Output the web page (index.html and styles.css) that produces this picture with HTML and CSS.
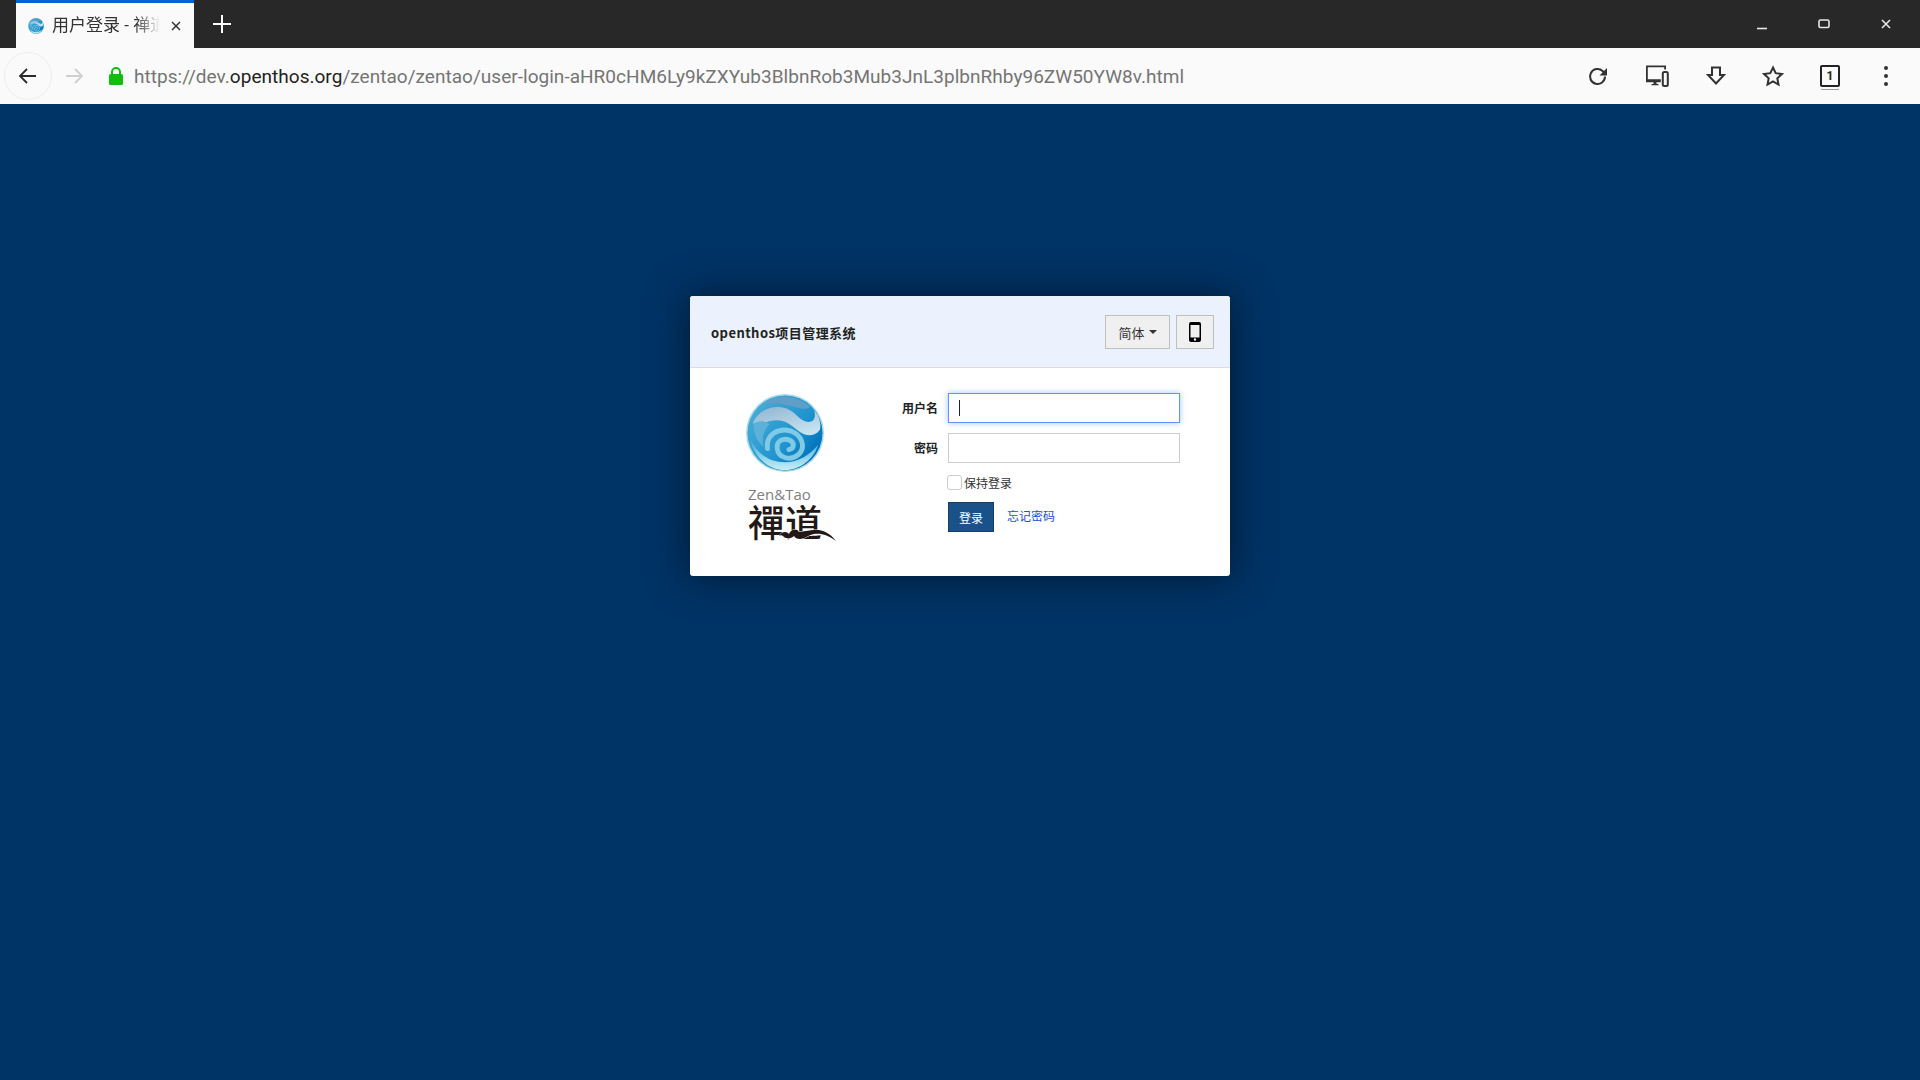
FILE: index.html
```html
<!DOCTYPE html>
<html lang="zh-CN">
<head>
    <meta charset="UTF-8">
    <title>用户登录 - 禅道</title>
    <link rel="stylesheet" href="styles.css">
</head>
<body>
    <!-- Shared globe logo -->
    <svg class="defs" width="0" height="0">
        <defs>
            <linearGradient id="globeFill" x1="0.1" y1="0.2" x2="0.9" y2="0.8">
                <stop offset="0" stop-color="#45aad6"/>
                <stop offset="0.6" stop-color="#1f94cf"/>
                <stop offset="1" stop-color="#0070bb"/>
            </linearGradient>
            <linearGradient id="globeTop" x1="0" y1="0" x2="0.7" y2="1">
                <stop offset="0" stop-color="#8fb4d0"/>
                <stop offset="1" stop-color="#c6e3ef"/>
            </linearGradient>
            <linearGradient id="globeBottom" x1="0" y1="0" x2="0" y2="1">
                <stop offset="0" stop-color="#39a8d8"/>
                <stop offset="1" stop-color="#c9eff6"/>
            </linearGradient>
            <symbol id="globe" viewBox="0 0 80 80">
                <circle cx="40" cy="40" r="40" fill="#a9dbe6"/>
                <circle cx="40" cy="40" r="38.500" fill="url(#globeFill)"/>
                <path d="M16 11C30 0 52 0 66 13C60 18 50 13 40 11C30 9 22 10 16 11z" fill="#5f9ec6"/>
                <path d="M7 30C14 12 38 8 51 21C57 27 63 31 69 27C71 24 71 20 70 17C75 22 77 30 76 36C73 42 66 44 59 41C50 37 44 27 32 27C22 27 14 33 7 30z" fill="url(#globeTop)"/>
                <path d="M4 46C12 62 24 70 40 70C54 70 66 62 74 52C70 66 56 78 40 78C22 78 8 64 4 46z" fill="url(#globeBottom)"/>
                <path d="M8 30C12 27 20 27 24 31C18 37 16 46 18 54C12 50 7 40 8 30z" fill="#5cb1d8"/>
                <path d="M22 56C20 42 33 34 46 38C57 42 62 54 54 62C46 69 33 66 32 56C31 48 38 45 44 47C50 49 50 56 44 57" fill="none" stroke="#7fcbe6" stroke-width="5" stroke-linecap="round"/>
            </symbol>
        </defs>
    </svg>

    <!-- Tab strip -->
    <header class="tabbar">
        <div class="tab">
            <svg class="tab-favicon" width="16" height="16"><use href="#globe"/></svg>
            <span class="tab-title">用户登录 - 禅道</span>
            <svg class="tab-close" width="10" height="10" viewBox="0 0 10 10"><path d="M1 1l8 8M9 1l-8 8"/></svg>
        </div>
        <svg class="new-tab" width="20" height="20" viewBox="0 0 20 20"><path d="M10 1v18M1 10h18"/></svg>
        <div class="window-controls">
            <button class="win-btn"><svg width="12" height="12" viewBox="0 0 12 12"><path d="M1 10.500h10"/></svg></button>
            <button class="win-btn"><svg width="12" height="12" viewBox="0 0 12 12"><rect x="1" y="2" width="10" height="7.500" rx="1.500"/></svg></button>
            <button class="win-btn"><svg width="12" height="12" viewBox="0 0 12 12"><path d="M2 2l8 8M10 2l-8 8"/></svg></button>
        </div>
    </header>

    <!-- Address bar -->
    <nav class="toolbar">
        <button class="back-btn">
            <svg width="20" height="20" viewBox="0 0 20 20"><path d="M18 10H2M9 3l-7 7 7 7"/></svg>
        </button>
        <svg class="forward" width="20" height="20" viewBox="0 0 20 20"><path d="M2 10h16M11 3l7 7-7 7"/></svg>
        <svg class="lock" width="16" height="20" viewBox="0 0 16 20"><path d="M4 9V6a4 4 0 0 1 8 0v3" fill="none" stroke="#0fbe0f" stroke-width="2"/><rect x="1" y="8" width="14" height="11" rx="1.500" fill="#0fbe0f"/></svg>
        <div class="url"><span class="url-dim">https://dev.</span>openthos.org<span class="url-dim">/zentao/zentao/user-login-aHR0cHM6Ly9kZXYub3BlbnRob3Mub3JnL3plbnRhby96ZW50YW8v.html</span></div>
        <div class="actions">
            <button class="act-btn"><svg width="22" height="22" viewBox="0 0 22 22"><path d="M18 11.500a7.500 7.500 0 1 1-2.400-5.500L18 8.500"/><path class="solid" d="M20 3v7.500h-7.500z"/></svg></button>
            <button class="act-btn act-wide"><svg width="24" height="24" viewBox="0 0 24 24"><path class="solid" d="M1 1.500h20v4h-1.800V3.200H2.800v12h13v3H1zM6.500 20h7v1.300h-7z"/><path class="solid" d="M8.500 18h3v2h-3z"/><rect x="17.800" y="8" width="5" height="14" rx="1.500"/></svg></button>
            <button class="act-btn act-wide"><svg width="20" height="22" viewBox="0 0 20 22"><path d="M6 2.500h8v7.500h4L10 18.500 2 10h4z"/></svg></button>
            <button class="act-btn"><svg width="22" height="22" viewBox="0 0 22 22"><path d="M11 2.500l2.700 5.700 6.200.8-4.600 4.300 1.200 6.200L11 16.400l-5.500 3.100 1.200-6.200L2.100 9l6.200-.8z"/></svg></button>
            <button class="act-btn"><span class="tab-count">1</span></button>
            <button class="act-btn act-last"><span class="dots"><i></i><i></i><i></i></span></button>
        </div>
    </nav>

    <!-- Login page -->
    <main class="page">
        <div class="login-card">
            <div class="card-head">
                <h4 class="card-title">openthos项目管理系统</h4>
                <div class="head-actions">
                    <button class="btn-lang">简体<span class="caret"></span></button>
                    <button class="btn-mobile">
                        <svg width="12" height="20" viewBox="0 0 12 20"><path fill-rule="evenodd" d="M2 0h8a2 2 0 0 1 2 2v16a2 2 0 0 1-2 2H2a2 2 0 0 1-2-2V2a2 2 0 0 1 2-2zM1.500 3v12.500h9V3zM6 16.300a1.200 1.200 0 1 0 0 2.400 1.200 1.200 0 0 0 0-2.400z"/></svg>
                    </button>
                </div>
            </div>
            <div class="card-body">
                <div class="logo">
                    <svg class="logo-globe" width="78" height="78"><use href="#globe"/></svg>
                    <div class="logo-en">Zen&amp;Tao</div>
                    <div class="logo-cn">禪道
                        <svg class="logo-swirl" width="60" height="20" viewBox="0 0 60 20"><path d="M1 12c3-5 8-5 10-2 2-5 8-6 10-2 5-1 9-1 14-2 8-1 16 2 23 11-8-6-15-8-22-7-6 1-9 5-14 5-3 0-5-1-6-3-3 3-9 3-11 0-1-1-3-1-4 0z"/></svg>
                    </div>
                </div>
                <form class="login-form">
                    <label class="field-label">用户名</label>
                    <div class="field">
                        <input class="field-input is-focus" type="text">
                        <span class="text-cursor"></span>
                    </div>
                    <label class="field-label">密码</label>
                    <div class="field">
                        <input class="field-input" type="password">
                    </div>
                    <div class="remember">
                        <input class="check" type="checkbox">
                        <span>保持登录</span>
                    </div>
                    <div class="submit-row">
                        <button class="btn-submit" type="button">登录</button>
                        <a class="forgot" href="#">忘记密码</a>
                    </div>
                </form>
            </div>
        </div>
    </main>
</body>
</html>
```
FILE: styles.css
```css
* {
    margin: 0;
    padding: 0;
    box-sizing: border-box;
}
html, body {
    height: 100%;
}
body {
    display: flex;
    flex-direction: column;
    overflow: hidden;
    font-family: Roboto, "Noto Sans CJK SC", sans-serif;
    background: #003366;
}
button {
    border: none;
    background: none;
    font-family: inherit;
}
.defs {
    position: absolute;
}

/* Tab strip */
.tabbar {
    display: flex;
    align-items: stretch;
    height: 48px;
    flex: none;
    padding-left: 16px;
    background: #282828;
}
.tab {
    display: flex;
    align-items: center;
    width: 178px;
    padding-left: 12px;
    border-top: 3px solid #0060df;
    background: #fafafa;
}
.tab-favicon {
    flex: none;
}
.tab-title {
    width: 108px;
    margin: -2px 0 0 8px;
    overflow: hidden;
    white-space: nowrap;
    font-size: 17px;
    line-height: 24px;
    color: #333;
    -webkit-mask-image: linear-gradient(to right, #000 78%, transparent 100%);
    mask-image: linear-gradient(to right, #000 78%, transparent 100%);
}
.tab-close {
    margin-left: 11px;
    fill: none;
    stroke: #333;
    stroke-width: 1.500;
}
.new-tab {
    align-self: center;
    margin-left: 18px;
    fill: none;
    stroke: #fff;
    stroke-width: 2;
}
.window-controls {
    display: flex;
    margin-left: auto;
    padding-right: 3px;
}
.win-btn {
    display: flex;
    align-items: center;
    justify-content: center;
    width: 62px;
}
.win-btn svg {
    fill: none;
    stroke: #e8e8e8;
    stroke-width: 1.600;
}

/* Address bar */
.toolbar {
    display: flex;
    align-items: center;
    height: 56px;
    flex: none;
    padding-left: 4px;
    background: #fafafa;
}
.back-btn {
    display: flex;
    align-items: center;
    justify-content: center;
    width: 48px;
    height: 48px;
    border: 1px solid #eeeeee;
    border-radius: 50%;
}
.back-btn svg {
    fill: none;
    stroke: #2b2b2b;
    stroke-width: 1.800;
}
.forward {
    margin-left: 12px;
    fill: none;
    stroke: #cfcfcf;
    stroke-width: 1.800;
}
.lock {
    margin-left: 24px;
}
.url {
    margin-left: 10px;
    font-size: 19px;
    letter-spacing: 0.03px;
    white-space: nowrap;
    color: #222;
}
.url-dim {
    color: #757575;
}
.actions {
    display: flex;
    align-items: center;
    margin-left: auto;
    padding-right: 12px;
}
.act-btn {
    display: flex;
    align-items: center;
    justify-content: center;
    width: 44px;
    height: 44px;
    margin-left: 13px;
}
.act-wide {
    margin-left: 15px;
}
.act-last {
    margin-left: 12px;
}
.act-btn svg {
    fill: none;
    stroke: #333;
    stroke-width: 2;
}
.act-btn svg .solid {
    fill: #333;
    stroke: none;
}
.tab-count {
    display: block;
    width: 20px;
    height: 22px;
    border: 2px solid #222;
    border-radius: 2px;
    box-shadow: 0 3px 0 -1px #fafafa, 0 4px 0 -1px #999;
    font-size: 12px;
    font-weight: 700;
    line-height: 18px;
    text-align: center;
    color: #222;
}
.dots {
    display: flex;
    flex-direction: column;
    gap: 4px;
}
.dots i {
    display: block;
    width: 4px;
    height: 4px;
    border-radius: 50%;
    background: #333;
}

/* Login page */
.page {
    flex: 1;
    padding: 192px 0 0 690px;
    background: #003366;
}
.login-card {
    width: 540px;
    height: 280px;
    border-radius: 3px;
    background: #fff;
    box-shadow: 0 0 40px rgba(0, 0, 0, 0.55);
    font-family: "Noto Sans CJK SC", sans-serif;
    overflow: hidden;
}
.card-head {
    display: flex;
    align-items: center;
    justify-content: space-between;
    height: 72px;
    padding: 1px 16px 0 21px;
    border-bottom: 1px solid #ddd;
    background: #ebf2fd;
}
.card-title {
    font-size: 13px;
    font-weight: 700;
    letter-spacing: 0.45px;
    color: #222;
}
.head-actions {
    display: flex;
    gap: 6px;
}
.btn-lang, .btn-mobile {
    display: flex;
    align-items: center;
    justify-content: center;
    height: 34px;
    border: 1px solid #bfbfbf;
    background: #f0f0f0;
    color: #333;
}
.btn-lang {
    width: 65px;
    font-size: 13px;
    font-family: "Noto Sans CJK SC", sans-serif;
}
.caret {
    margin-left: 4px;
    border-top: 4px solid #333;
    border-left: 4px solid transparent;
    border-right: 4px solid transparent;
}
.btn-mobile {
    width: 38px;
}
.card-body {
    display: flex;
    padding-top: 25px;
}
.logo {
    display: flex;
    flex-direction: column;
    width: 168px;
    margin: 1px 0 0 56px;
}
.logo-en {
    margin: 15px 0 0 2px;
    font-family: "Open Sans", sans-serif;
    font-size: 15px;
    line-height: 15px;
    color: #808080;
}
.logo-cn {
    position: relative;
    margin: 2px 0 0 2px;
    font-family: "Noto Sans CJK TC", sans-serif;
    font-size: 37px;
    font-weight: 500;
    line-height: 34px;
    color: #231815;
    white-space: nowrap;
}
.logo-swirl {
    position: absolute;
    left: 30px;
    top: 20px;
    fill: #231815;
    stroke: #fff;
    stroke-width: 1;
    paint-order: stroke;
}
.login-form {
    display: grid;
    grid-template-columns: 58px 232px;
    grid-template-rows: 30px 30px auto auto;
    column-gap: 10px;
    row-gap: 10px;
    align-content: start;
    align-items: center;
    margin-left: -34px;
}
.field-label {
    font-size: 12px;
    font-weight: 700;
    line-height: 1;
    text-align: right;
    color: #222;
}
.field {
    position: relative;
    height: 30px;
}
.field-input {
    display: block;
    width: 100%;
    height: 30px;
    border: 1px solid #ccc;
    outline: none;
    background: #fff;
}
.is-focus {
    border-color: #5a96f5;
    box-shadow: 0 0 6px rgba(90, 150, 245, 0.55);
}
.text-cursor {
    position: absolute;
    left: 11px;
    top: 7px;
    width: 1px;
    height: 16px;
    background: #222;
}
.remember {
    grid-column: 2;
    display: flex;
    align-items: center;
    gap: 2px;
    margin: 2px 0 0 -1px;
    font-size: 12px;
    line-height: 15px;
    color: #333;
}
.check {
    appearance: none;
    -webkit-appearance: none;
    width: 15px;
    height: 15px;
    border: 1px solid #ccc;
    border-radius: 3px;
    background: #fff;
}
.submit-row {
    grid-column: 2;
    display: flex;
    align-items: center;
    margin-top: 2px;
}
.btn-submit {
    width: 46px;
    height: 30px;
    border: 1px solid #133f6c;
    background: #1a5188;
    color: #fff;
    font-size: 12px;
    font-family: "Noto Sans CJK SC", sans-serif;
}
.forgot {
    margin: -4px 0 0 13px;
    font-size: 12px;
    color: #1a4fd8;
    text-decoration: none;
}
```
